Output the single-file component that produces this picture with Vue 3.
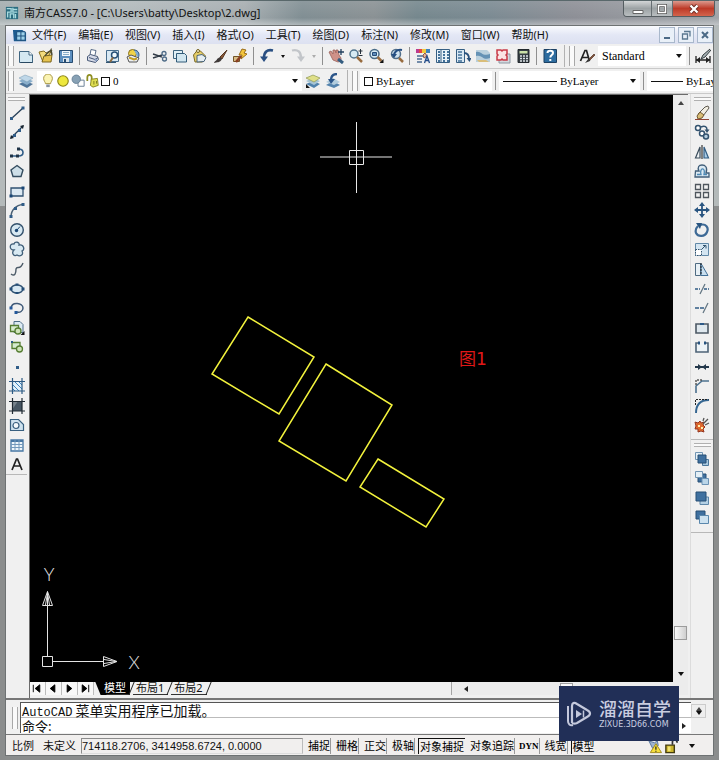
<script setup>
import { ref } from 'vue'

const icons = {
  new: '<path d="M1.5 3.5h9.500l3.500 3.500v7.500h-13z" fill="#d4e8f2" stroke="#3f6581"/><path d="M11 3.500v3.500h3.500" fill="#fff" stroke="#3f6581"/><path d="M2.500 14.500h12" stroke="#284861"/>',
  open: '<path d="M1 4l5-1 2 2 6-3-3 5-6 7z" fill="#f3dc7d" stroke="#8a7220"/><path d="M4 14l2-6 8-1-1 7z" fill="#e6c350" stroke="#7b651c"/><path d="M7 8c2-4 5-4 6-6l1 5" fill="none" stroke="#4b4a33" stroke-width="1.500"/>',
  save: '<path d="M1.500 2.500h13v12h-13z" fill="#5d8fbf" stroke="#264b70"/><path d="M4 3h8v5H4z" fill="#f1f7fb"/><path d="M5 10h6v4H5z" fill="#dbe5ec"/><path d="M6 11h2v3H6z" fill="#264b70"/><path d="M5 4.500h6M5 6.500h6" stroke="#89adc9"/>',
  print: '<path d="M5 7L6 1.500l5 1L10 7" fill="#fff" stroke="#586b88"/><path d="M2.500 8.500l3-2 7 2 1 3-3 3-8-2z" fill="#d5d9e6" stroke="#465876"/><path d="M4 9.500l6 2 3-2" fill="none" stroke="#465876"/><circle cx="11" cy="12" r="1.500" fill="#8ea2c4"/>',
  preview: '<path d="M1.500 2.500h12v11h-12z" fill="#d9e9f3" stroke="#476c8c"/><path d="M1 14.500h10" stroke="#345570"/><circle cx="9.500" cy="7" r="3" fill="#eef8fd" stroke="#264f77" stroke-width="1.500"/><path d="M8 9.500L5 14" stroke="#8c6a40" stroke-width="2"/>',
  publish: '<circle cx="7.500" cy="5.500" r="4" fill="#f0d34b" stroke="#876f18"/><path d="M9 2c5 0 6 5 4 8" fill="#7eabd4" stroke="#315a88"/><path d="M2 9l4-2 8 3-2 4-8 0z" fill="#eceff3" stroke="#555"/><path d="M4 9.500l5 2 3-1" fill="none" stroke="#c39e25" stroke-width="2"/>',
  cut: '<path d="M1 6l9 3M1 10l9-3" stroke="#303a46" stroke-width="1.500"/><circle cx="12" cy="5.500" r="2" fill="none" stroke="#4e6b87" stroke-width="1.300"/><circle cx="12.500" cy="11" r="2" fill="none" stroke="#4e6b87" stroke-width="1.300"/>',
  copy: '<path d="M1.500 2.500h9v8h-9z" fill="#e1f0f6" stroke="#3e657f"/><path d="M4.500 5.500h8l2 2v6.500h-10z" fill="#d1e6f0" stroke="#315b79"/>',
  paste: '<path d="M1.500 7l4-5 3 1 5 5-3 6H3z" fill="#e8cf67" stroke="#7c6a29"/><path d="M5 7.500l5-1 4 3-2 4-7 .5z" fill="#e5edf1" stroke="#48637a"/><circle cx="6" cy="3" r="1.500" fill="#f8f2d0" stroke="#746323"/>',
  brush: '<path d="M15 2l-7 7 2 2z" fill="#8b5835" stroke="#573723"/><path d="M8 9l2 2c-2 4-5 3-8 4 1-3 3-2 3-4z" fill="#403a39"/>',
  block: '<path d="M10 1l4 1-2 3 3 1-6 5 1-4-3 0z" fill="#f4c53d" stroke="#9b6d17"/><path d="M1.500 8.500h6v5h-6z" fill="#d8bd86" stroke="#725326"/><path d="M9 8l-5 6" stroke="#8b3f22" stroke-width="2.500"/>',
  undo: '<path d="M14 2.500C8 1 5 4 5 10" fill="none" stroke="#294f82" stroke-width="2.600"/><path d="M1 8.500h8L5 14z" fill="#294f82"/>',
  redo: '<path d="M2 2.500C8 1 11 4 11 10" fill="none" stroke="#c2c5c9" stroke-width="2.300"/><path d="M7 8.500h8L11 14z" fill="#c2c5c9"/>',
  pan: '<path d="M3 8L1 4l2-1 2 3V2h2l1 3V2h2l1 5 2 3v3l-3 1-5-2z" fill="#cf9188" stroke="#9a625b" stroke-width=".8"/><path d="M10 11l5 4" stroke="#345d80" stroke-width="3"/><path d="M13 1v6M10 4h6" stroke="#23405e" stroke-width="1.300"/>',
  zoom: '<circle cx="6" cy="6" r="4" fill="#d6eaf3" stroke="#52758e" stroke-width="1.500"/><path d="M9 9l5 5" stroke="#986c40" stroke-width="2.500"/><path d="M12.500 1v5M10.500 3h4M10.500 7.500h4" stroke="#25303b"/>',
  zoomWindow: '<circle cx="6.500" cy="6" r="4.500" fill="#d6eaf3" stroke="#486b87" stroke-width="1.500"/><path d="M4.500 4.500h4v3h-4z" fill="#5d8ebd" stroke="#254b77"/><path d="M9.500 9l4 4" stroke="#986c40" stroke-width="2.500"/><path d="M15.500 11v4h-4z" fill="#111"/>',
  zoomPrev: '<circle cx="8" cy="6" r="4.500" fill="#d0e2ef" stroke="#526f8a" stroke-width="1.500"/><path d="M14 2C9 1 6 4 6 8" fill="none" stroke="#254e82" stroke-width="2"/><path d="M3 6h6l-3 4z" fill="#254e82"/><path d="M11 10l4 4" stroke="#986c40" stroke-width="2.500"/>',
  props: '<path d="M1 1h3v4H1z" fill="#bb3c91"/><path d="M4 1h3v4H4z" fill="#e24744"/><path d="M7 1h4v4H7z" fill="#f1cb3c"/><path d="M11 1h4v4h-4z" fill="#3f83bb"/><path d="M2 8h6M2 11h5M2 14h5" stroke="#4a6b92" stroke-width="1.500"/><path d="M8 7l2-2 2 3-3 2z" fill="#e6b39e" stroke="#8e5848"/><path d="M9.500 15L12 8l2.500 7M10.500 12.500h3" fill="none" stroke="#244d8a" stroke-width="1.300"/>',
  design: '<path d="M1.500 1.500h13v13h-13z" fill="#e8f2f9" stroke="#365f83"/><path d="M6 1.500v13" stroke="#365f83"/><path d="M3 4h2M3 7h2M3 10h2M3 13h2M8 4h2M12 4h2M8 7h2M12 7h2M8 10h2M12 10h2M8 13h2M12 13h2" stroke="#44729a" stroke-width="2"/>',
  palette: '<path d="M1.500 1.500h8v13h-8z" fill="#d9e8f3" stroke="#365f83"/><path d="M3 4h4M3 7h4M3 10h4M3 13h4" stroke="#44729a" stroke-width="1.500"/><path d="M9 5c4 0 5 2 5 6" fill="none" stroke="#28507c" stroke-width="1.800"/><path d="M11.500 10h5l-2 4z" fill="#28507c"/>',
  sheet: '<path d="M1 2h11l3 3v9H1z" fill="#bad0dd"/><path d="M1 4c5-2 6 5 14 2v4C8 13 7 6 1 8z" fill="#6592b5"/><path d="M2 12h9l3 2H4z" fill="#d9bd79"/>',
  markup: '<path d="M4 6h11v9H4z" fill="#d4d9df" stroke="#8d98a3"/><path d="M2 2h4l1 1 1-1h4v4l-1 1 1 1v4H8l-1-1-1 1H2V8l1-1-1-1z" fill="#fbe4e4" stroke="#c83845" stroke-width="1.500"/>',
  calc: '<path d="M3 1.500h11v13H3z" fill="#353d43" stroke="#22282d"/><path d="M4.500 3h8v2.500h-8z" fill="#cbe1a8"/><path d="M5 8h2M8 8h2M11 8h2M5 10.500h2M8 10.500h2M11 10.500h2M5 13h2M8 13h2M11 13h2" stroke="#dce2e6" stroke-width="1.500"/>',
  help: '<path d="M2 1.500h12.500v13H2z" fill="#2d6c9f" stroke="#1c4163"/><path d="M5.500 5c0-3 5.500-3 5.500 0 0 2-2.700 2-2.700 4.500" fill="none" stroke="#fff" stroke-width="2"/><path d="M7.300 11h2v2h-2z" fill="#fff"/>',
  textStyle: '<path d="M1.500 13L6 2.500h1.500L10.500 13M3.500 9.500h6" fill="none" stroke="#222" stroke-width="1.700"/><path d="M15 6l-5 5 1 1 5-5z" fill="#885338" stroke="#5d4034" stroke-width=".8"/><path d="M10 10l-4 5 5-2z" fill="#333"/>',
  dim: '<path d="M1 8v7M15 8v7M1 12h14" stroke="#222" stroke-width="1.300"/><path d="M1 12l4-3v6zM15 12l-4-3v6z" fill="#222"/><path d="M15 1L8 7l-2 4 4-2 6-7" fill="#a7b2b5" stroke="#343b3e"/>',
  layers: '<path d="M1 11l6-3 8 3-6 4z" fill="#4f7498"/><path d="M1 8l6-3 8 3-6 4z" fill="#89aecb"/><path d="M1 5l6-3 8 3-6 4z" fill="#bfd7e8" stroke="#7496b0" stroke-width=".5"/>',
  bulb: '<path d="M5 11c0-2-2-3-2-6a5 5 0 0 1 10 0c0 3-2 4-2 6z" fill="#fbf4b3" stroke="#9f8d36"/><path d="M6 12h4v3H6z" fill="#8793a4"/>',
  sun: '<circle cx="8" cy="8" r="6" fill="#eee83d" stroke="#8c851a" stroke-width="1.300"/>',
  viewport: '<path d="M8 7h7v7H8z" fill="#fff" stroke="#5c738a"/><circle cx="6" cy="6" r="4.800" fill="#87a1b5" stroke="#647e94"/>',
  lock: '<path d="M1.500 8V4c0-4 5-4 5 0v4" fill="none" stroke="#8f8e22" stroke-width="2"/><path d="M6 6l7-1 1 8-6 2-3-2z" fill="#dfde51" stroke="#80801d"/><path d="M9 8v4M12 8v3" stroke="#77771c"/>',
  makeLayer: '<path d="M1 11l7-3 7 3-6 4z" fill="#4f82ad"/><path d="M1 8l7-3 7 3-6 4z" fill="#a7c5d5"/><path d="M1 5l7-3 7 3-6 4z" fill="#dfdf87" stroke="#8d9654" stroke-width=".7"/><path d="M1 15v-4l4 4z" fill="#111"/>',
  prevLayer: '<path d="M1 12l7-4 7 4-6 3z" fill="#5483ad"/><path d="M1 9l7-4 7 4-6 3z" fill="#b3cddd"/><path d="M12 1C7 1 6 4 6 7" fill="none" stroke="#2c568a" stroke-width="2.300"/><path d="M3 6h7l-4 5z" fill="#2c568a"/>',
  line: '<path d="M2.500 13.500L14 3" stroke="#263e56" stroke-width="1.300"/><path d="M1 12h3v3H1zM12.500 1.500h3v3h-3z" fill="#315d88"/>',
  xline: '<path d="M2 14L14 2" stroke="#263e56" stroke-width="1.300"/><path d="M1 15l1-4 3 3zM15 1l-1 4-3-3z" fill="#17232f"/><path d="M4 10h3v3H4zM9 5h3v3H9z" fill="#315d88"/>',
  pline: '<path d="M1.500 12h8c6 0 6-7 0-7" fill="none" stroke="#315d88" stroke-width="1.600"/><path d="M1 10.500h3v3H1zM7 10.500h3v3H7zM8 3.500h3v3H8z" fill="#1e3246"/>',
  polygon: '<path d="M8 2.500l6 4.500-2 6.500H4L2 7z" fill="#cedfe8" stroke="#354d60" stroke-width="1.400"/>',
  rect: '<path d="M2 5h12v8H2z" fill="#dce9f2" stroke="#315272" stroke-width="1.300"/><path d="M.5 11.500h3v3h-3zM12.500 3.500h3v3h-3z" fill="#1b4775"/>',
  arc: '<path d="M2 15C2 8 7 3 14 2.500" fill="none" stroke="#4b6175" stroke-width="1.500"/><path d="M.5 13h3v3h-3zM5 5h3v3H5zM12.500 1h3v3h-3z" fill="#315d88"/>',
  circle: '<circle cx="8" cy="8" r="6.300" fill="#d8e9f2" stroke="#33516c" stroke-width="1.400"/><path d="M8 8l3-3.500" stroke="#1b4775"/><circle cx="7.500" cy="8.500" r="1.700" fill="#1b4775"/>',
  cloud: '<path d="M5 9C0 9 0 2 5 3c1-3 6-2 5 1 5-1 6 5 3 6 2 4-2 6-5 4-3 2-6-2-3-5z" fill="#d8e9f2" stroke="#405f79" stroke-width="1.300"/>',
  spline: '<path d="M2 13c4 3 5-1 5-5 1-4 4 2 7-6" fill="none" stroke="#4b5a67" stroke-width="1.400"/>',
  ellipse: '<ellipse cx="8" cy="8" rx="6" ry="4" fill="#d7e8f3" stroke="#315272" stroke-width="1.400"/><path d="M.5 6.500h3v3h-3zM12.500 6.500h3v3h-3zM6.500 2.500h3v2h-3zM6.500 11h3v2h-3z" fill="#244e78"/>',
  ellipseArc: '<path d="M2 8C3 1 14 3 14 8c0 3-3 5-6 4" fill="none" stroke="#405a78" stroke-width="1.500"/><path d="M.5 6.500h3v3h-3zM5.500 11h3v3h-3z" fill="#24589a"/>',
  insert: '<path d="M5 1.500h6l3 3v8H5z" fill="#dceaf3" stroke="#4d6d87"/><path d="M1.500 5.500h8v6h-8z" fill="#d6ebcf" stroke="#557d32" stroke-width="1.300"/><circle cx="9" cy="11" r="3" fill="#cfe4b9" stroke="#557d32" stroke-width="1.300"/><path d="M15.500 11v4h-4z" fill="#111"/>',
  makeBlock: '<path d="M3 3.500h8v6H3z" fill="#d6ebcf" stroke="#557d32" stroke-width="1.300"/><circle cx="10.500" cy="10" r="3" fill="#cfe4b9" stroke="#557d32" stroke-width="1.300"/><path d="M2 2h2v2H2z" fill="#295a86"/>',
  point: '<path d="M7 7h3v3H7z" fill="#315d88"/>',
  hatch: '<path d="M3 3h10v10H3z" fill="#e2f1fa"/><path d="M3 6l7 7M3 10l3 3M5 3l8 8M9 3l4 4" stroke="#3c83bd"/><path d="M3.500 0v16M13 0v16M0 3.500h16M0 13h16" stroke="#2d5a83" stroke-width="1.200"/>',
  gradient: '<path d="M3 3h10v10H3z" fill="#485764"/><path d="M3 3h6L3 12z" fill="#79848d"/><path d="M3.500 0v16M13 0v16M0 3.500h16M0 13h16" stroke="#202a33" stroke-width="1.200"/>',
  region: '<path d="M1.500 2.500h8l5 5v6h-13z" fill="#cee2ef" stroke="#385f7f" stroke-width="1.200"/><circle cx="7" cy="8.500" r="3" fill="#f3f9fc" stroke="#385f7f" stroke-width="1.200"/>',
  table: '<path d="M2 3h12v11H2z" fill="#eef6fb" stroke="#4777a4" stroke-width="1.300"/><path d="M2 4h12" stroke="#4777a4" stroke-width="2"/><path d="M2 7.500h12M2 10.500h12M6 3v11M10 3v11" stroke="#7399bc"/>',
  text: '<path d="M3 14L7.500 3h1L13 14M5 10h6" fill="none" stroke="#222" stroke-width="1.700"/>',
  erase: '<path d="M11 2l3-1 1 2-6 8-3 1-2-3z" fill="#f2eee2" stroke="#5e5a50"/><path d="M6 7l4 3-2 3-4 1-1-3z" fill="#d9bd75" stroke="#705833"/><path d="M1 14.500h14" stroke="#8f4334"/>',
  copyObj: '<circle cx="4" cy="4" r="2.500" fill="#fff" stroke="#33536f" stroke-width="1.500"/><circle cx="8" cy="9.500" r="2.500" fill="#fff" stroke="#33536f" stroke-width="1.500"/><circle cx="12" cy="12.500" r="2.500" fill="#b5cee0" stroke="#33536f" stroke-width="1.500"/><path d="M7 3c4-2 6 0 6 3" fill="none" stroke="#33536f" stroke-width="1.500"/><path d="M10.500 5.500h5L13 9z" fill="#33536f"/>',
  mirror: '<path d="M6 3v11H1.500z" fill="#eef2f4" stroke="#3a4c5b" stroke-width="1.200"/><path d="M10 3v11h4.500z" fill="#a9cbe5" stroke="#315c82" stroke-width="1.200"/><path d="M8 1v14" stroke="#111"/>',
  offset: '<path d="M1 14h14v-4h-3c2-6-1-8-4-8S3 4 5 8H1.500z" fill="#dbe9f2" stroke="#405e79" stroke-width="1.300"/><path d="M3 11.500h4c-2-7 5-8 3 0h3" fill="none" stroke="#4c88b4" stroke-width="1.300"/>',
  array: '<path d="M1.500 1.500h5v5h-5zM9.500 1.500h5v5h-5zM1.500 9.500h5v5h-5zM9.500 9.500h5v5h-5z" fill="#f3f3f3" stroke="#4f565d" stroke-width="1.300"/>',
  move: '<path d="M8 3v10M3 8h10" stroke="#285480" stroke-width="1.800"/><path d="M8 0l3 4H5zM8 16l3-4H5zM0 8l4-3v6zM16 8l-4-3v6z" fill="#285480"/>',
  rotate: '<path d="M6 3c6-2 9 3 7 7-2 5-9 5-11 1-1-3 0-5 2-7" fill="none" stroke="#3e6a96" stroke-width="2.200"/><path d="M2 1h6L6 7z" fill="#285480"/>',
  scale: '<path d="M1.500 2.500h13v12h-13z" fill="#d4e5f1" stroke="#6188a7"/><path d="M1.500 8.500h6v6h-6z" fill="#fff" stroke="#33536e" stroke-dasharray="1.500 1"/><path d="M8 8l3-3M9 4.500h3v3" stroke="#33536e" fill="none"/>',
  stretch: '<path d="M1.500 2.500h5v12h-5z" fill="#e8f0f5" stroke="#4f6b82"/><path d="M7 2.500l7 12H7z" fill="#c9dfef" stroke="#416f97"/><path d="M7 2v12" stroke="#222" stroke-dasharray="2 1"/>',
  trim: '<path d="M1 8h5M10 8h5" stroke="#315b84" stroke-width="1.500" stroke-dasharray="3 1"/><path d="M6 13l5-10" stroke="#637583" stroke-width="1.300"/>',
  extend: '<path d="M1 8h9" stroke="#315b84" stroke-width="1.500" stroke-dasharray="4 1"/><path d="M9 13l5-10" stroke="#637583" stroke-width="1.300"/>',
  breakPoint: '<path d="M2 4h12v9H2z" fill="#dfe8ee" stroke="#4d5965" stroke-width="1.600"/><path d="M6 3h4v2H6z" fill="#2d5987"/>',
  breakGap: '<path d="M5 4H2v9h12V4h-3" fill="#edf3f7" stroke="#4d6377" stroke-width="1.600"/><path d="M4 2.500h2v3H4zM10 2.500h2v3h-2z" fill="#285480"/>',
  join: '<path d="M1 8h14" stroke="#24384b" stroke-width="2"/><path d="M4 5l4 3-4 3zM12 5L8 8l4 3z" fill="#24384b"/>',
  chamfer: '<path d="M2 15V8l6-5h7" fill="none" stroke="#4c718f" stroke-width="1.600"/><path d="M2 7V2h6" fill="none" stroke="#111" stroke-dasharray="2 1"/>',
  fillet: '<path d="M2 15C2 7 6 2 15 2" fill="none" stroke="#356691" stroke-width="1.900"/><path d="M1.500 7V1.500h13" fill="none" stroke="#222" stroke-dasharray="2 1"/>',
  explode: '<path d="M1 5l3 1 2-2 1 2 3-1-1 3 2 2-2 2 1 3-3-1-3 1v-3L1 12l1-3z" fill="#df6a2e" stroke="#94351f"/><path d="M4 8h2v2H4zM7 10h2v2H7z" fill="#fff0b0"/><path d="M9 7l5-5M11 8l4-2M9 4l1-3" stroke="#555" stroke-width="1.300"/>',
  front: '<path d="M1.500 1.500h7v7h-7z" fill="#e4eff6" stroke="#7094b2"/><path d="M8.500 8.500h6v6h-6z" fill="#a9c8df" stroke="#4c779b"/><path d="M4 4h8v8H4z" fill="#3f709f" stroke="#264e75"/>',
  back: '<path d="M4 4h8v8H4z" fill="#3f709f" stroke="#264e75"/><path d="M1.500 1.500h7v6h-7z" fill="#e4eff6" stroke="#7094b2"/><path d="M8 8.500h6.500v6H8z" fill="#bad5e8" stroke="#6c93b5"/>',
  above: '<path d="M6 7h8.500v7.500H6z" fill="#b4d0e4" stroke="#5d86a9"/><path d="M2 2h10v9H2z" fill="#3f709f" stroke="#264e75"/>',
  under: '<path d="M2 2h9v8H2z" fill="#3f709f" stroke="#264e75"/><path d="M5.500 6.500h9v8h-9z" fill="#cde2f0" stroke="#5a88ad"/>'
}

const menus = ['文件(F)', '编辑(E)', '视图(V)', '插入(I)', '格式(O)', '工具(T)', '绘图(D)', '标注(N)', '修改(M)', '窗口(W)', '帮助(H)']
const standardBar = [
  'new', 'open', 'save', '|', 'print', 'preview', 'publish', '|',
  'cut', 'copy', 'paste', 'brush', 'block', '|', 'undo', 'v', 'redo', 'w', '|',
  'pan', 'zoom', 'zoomWindow', 'zoomPrev', '|',
  'props', 'design', 'palette', 'sheet', 'markup', 'calc', '|', 'help'
]
const drawBar = ['line', 'xline', 'pline', 'polygon', 'rect', 'arc', 'circle', 'cloud', 'spline', 'ellipse', 'ellipseArc', 'insert', 'makeBlock', 'point', 'hatch', 'gradient', 'region', 'table', 'text']
const modifyBar = ['erase', 'copyObj', 'mirror', 'offset', 'array', 'move', 'rotate', 'scale', 'stretch', 'trim', 'extend', 'breakPoint', 'breakGap', 'join', 'chamfer', 'fillet', 'explode']
const orderBar = ['front', 'back', 'above', 'under']
const layerState = ['bulb', 'sun', 'viewport', 'lock']
const navs = [
  { name: 'first', d: 'M3 3v8M10 3v8L5 7z' },
  { name: 'previous', d: 'M9 3v8L4 7z' },
  { name: 'next', d: 'M5 3v8l5-4z' },
  { name: 'last', d: 'M4 3v8l5-4zM11 3v8' }
]
const modes = ref([
  { label: '捕捉', on: false }, { label: '栅格', on: false }, { label: '正交', on: false },
  { label: '极轴', on: false }, { label: '对象捕捉', on: true }, { label: '对象追踪', on: false },
  { label: 'DYN', on: false }, { label: '线宽', on: false }, { label: '模型', on: true }
])
const command = ref('')
</script>

<template>
  <div class="window">
    <header class="title">
      <svg class="app-icon" viewBox="0 0 16 16" aria-hidden="true">
        <path d="M1 1h14v14H1z" fill="#2b6d80" />
        <path d="M2 3h5v4H3v6M9 2v5h5M6 14V9h4v5M12 9v5M9 4h5" fill="none" stroke="#a9dce0" stroke-width="1.500" />
      </svg>
      <h1>南方CASS7.0 - [C:\Users\batty\Desktop\2.dwg]</h1>
      <div class="win-buttons">
        <button aria-label="Minimize"><svg viewBox="0 0 16 14"><path d="M3 8.500h10v3H3z" fill="#fff" stroke="#666" /></svg></button>
        <button aria-label="Restore"><svg viewBox="0 0 16 14"><path d="M4.500 3.500h7v7h-7z" fill="none" stroke="#555" stroke-width="3" /><path d="M4.500 3.500h7v7h-7z" fill="none" stroke="#fff" stroke-width="1.500" /></svg></button>
        <button class="close" aria-label="Close"><svg viewBox="0 0 16 14"><path d="M4.500 3.500l7 7M11.500 3.500l-7 7" stroke="#6d2b22" stroke-width="4" /><path d="M4.500 3.500l7 7M11.500 3.500l-7 7" stroke="#fff" stroke-width="2.300" /></svg></button>
      </div>
    </header>

    <div class="body">
      <nav class="menu">
        <svg class="doc-icon" viewBox="0 0 16 16" aria-hidden="true">
          <path d="M1 2h10l4 3v9H2z" fill="#1d5b8f" />
          <path d="M5 4h9v9H5z" fill="#9cd0ea" stroke="#174a77" />
          <path d="M9.500 4v9M5 8.500h9" stroke="#174a77" />
        </svg>
        <button v-for="m in menus" :key="m" class="menu-item">{{ m }}</button>
        <span class="mdi">
          <button aria-label="Minimize drawing"><svg viewBox="0 0 14 14"><path d="M4 10h6" stroke="#4b6a86" stroke-width="2" /></svg></button>
          <button aria-label="Restore drawing"><svg viewBox="0 0 14 14"><path d="M5 3.500h6v5M3.500 6h5v5h-5z" fill="none" stroke="#5a7890" stroke-width="1.300" /></svg></button>
          <button aria-label="Close drawing"><svg viewBox="0 0 14 14"><path d="M4 4l6 6M10 4l-6 6" stroke="#4b6a86" stroke-width="2" /></svg></button>
        </span>
      </nav>

      <div class="bar">
        <span class="grip"></span>
        <template v-for="(t, i) in standardBar" :key="i">
          <span v-if="t === '|'" class="sep"></span>
          <button v-else-if="t === 'v' || t === 'w'" class="drop" :class="{ off: t === 'w' }" aria-label="History"><span class="tri small"></span></button>
          <button v-else class="tool" :aria-label="t"><svg viewBox="0 0 16 16" v-html="icons[t]"></svg></button>
        </template>
        <span class="edge"></span>
        <span class="grip"></span>
        <button class="tool" aria-label="textStyle"><svg viewBox="0 0 16 16" v-html="icons.textStyle"></svg></button>
        <span class="combo style-combo">
          <select aria-label="Text style"><option>Standard</option></select>
          <span class="tri"></span>
        </span>
        <span class="sep"></span>
        <button class="tool" aria-label="dim"><svg viewBox="0 0 16 16" v-html="icons.dim"></svg></button>
      </div>

      <div class="bar">
        <span class="grip"></span>
        <button class="tool" aria-label="layers"><svg viewBox="0 0 16 16" v-html="icons.layers"></svg></button>
        <span class="combo layer-combo">
          <svg v-for="s in layerState" :key="s" class="state" viewBox="0 0 16 16" aria-hidden="true" v-html="icons[s]"></svg>
          <span class="swatch"></span>
          <select aria-label="Layer"><option>0</option></select>
          <span class="tri"></span>
        </span>
        <button class="tool" aria-label="makeLayer"><svg viewBox="0 0 16 16" v-html="icons.makeLayer"></svg></button>
        <button class="tool" aria-label="prevLayer"><svg viewBox="0 0 16 16" v-html="icons.prevLayer"></svg></button>
        <span class="edge"></span>
        <span class="grip"></span>
        <span class="combo color-combo">
          <span class="swatch"></span>
          <select aria-label="Color"><option>ByLayer</option></select>
          <span class="tri"></span>
        </span>
        <span class="sep"></span>
        <span class="combo type-combo">
          <span class="rule long"></span>
          <select aria-label="Linetype"><option>ByLayer</option></select>
          <span class="tri"></span>
        </span>
        <span class="sep"></span>
        <span class="combo weight-combo">
          <span class="rule"></span>
          <select aria-label="Lineweight"><option>ByLayer</option></select>
        </span>
      </div>

      <main class="work">
        <aside class="dock left">
          <div class="palette">
            <span class="hgrip"></span>
            <div class="tools draw">
              <button v-for="t in drawBar" :key="t" class="vtool" :aria-label="t"><svg viewBox="0 0 16 16" v-html="icons[t]"></svg></button>
            </div>
          </div>
        </aside>

        <section class="view">
          <div class="canvas">
            <svg class="drawing" aria-hidden="true">
              <g fill="none" stroke="#f2f23c" stroke-width="1.500">
                <path d="M218 222L284 262L249 319L182 279z" />
                <path d="M296 269L362 310L316 386L249 346z" />
                <path d="M348 364L414 404L396 432L330 392z" />
              </g>
              <path d="M290 62H362M326.500 27V98M319.500 55.500h14v14h-14z" fill="none" stroke="#e8e8e8" />
              <text x="429" y="270" class="note">图<tspan class="digit">1</tspan></text>
            </svg>
            <svg class="ucs" viewBox="0 0 120 121" aria-hidden="true">
              <path d="M12.500 95.500h10v10h-10zM17.500 95V30.500M12.500 44.500L17.500 30.500L22.500 44.500zM15.500 44l2-12 2 12M23 100.500h50M73.500 95.500L87 100.500L73.500 105.500zM74 98.500l12 2-12 2" fill="none" stroke="#e4e4e4" />
              <text x="19" y="20" class="axis">Y</text>
              <text x="104" y="108" class="axis">X</text>
            </svg>
          </div>
          <div class="vscroll">
            <span class="tri up"></span>
            <span class="thumb"></span>
            <span class="tri"></span>
          </div>
          <div class="tabs">
            <button v-for="n in navs" :key="n.name" class="nav" :aria-label="n.name"><svg viewBox="0 0 14 14"><path :d="n.d" fill="#000" stroke="#000" /></svg></button>
            <button class="tab active">模型</button>
            <button class="tab">布局1</button>
            <button class="tab">布局2</button>
            <div class="hscroll">
              <span class="tri west"></span>
              <span class="hthumb"></span>
              <span class="tri east"></span>
            </div>
          </div>
        </section>

        <aside class="dock right">
          <div class="palette">
            <span class="hgrip"></span>
            <div class="tools modify">
              <button v-for="t in modifyBar" :key="t" class="vtool" :aria-label="t"><svg viewBox="0 0 16 16" v-html="icons[t]"></svg></button>
            </div>
          </div>
          <div class="palette">
            <span class="hgrip"></span>
            <div class="tools order">
              <button v-for="t in orderBar" :key="t" class="vtool" :aria-label="t"><svg viewBox="0 0 16 16" v-html="icons[t]"></svg></button>
            </div>
          </div>
        </aside>
      </main>

      <section class="command">
        <span class="grip"></span>
        <div class="console">
          <p><span class="latin">AutoCAD</span> 菜单实用程序已加载。</p>
          <div class="prompt">
            <label for="cmd">命令:</label>
            <input id="cmd" v-model="command" type="text" autocomplete="off" />
            <span class="tri east"></span>
          </div>
        </div>
        <div class="cscroll"><span class="tri up"></span><span class="tri"></span></div>
      </section>

      <footer class="status">
        <span class="scale">比例</span>
        <span class="scale">未定义</span>
        <output class="coords">714118.2706, 3414958.6724, 0.0000</output>
        <button v-for="m in modes" :key="m.label" class="mode" :class="{ on: m.on, dyn: m.label === 'DYN' }" @click="m.on = !m.on">{{ m.label }}</button>
        <span class="tray">
          <svg viewBox="0 0 16 16" aria-hidden="true"><path d="M2 2l6 2 3-2 1 5-6 3z" fill="#9fb3cf" stroke="#56749d" /><path d="M9.500 5l6 9.500h-12z" fill="#f7e03c" stroke="#a18a19" /><path d="M9.500 8v3.500M9.500 12.500v1" stroke="#222" stroke-width="1.300" /></svg>
          <svg viewBox="0 0 16 16" aria-hidden="true"><path d="M2 6.500h9v8H2z" fill="#cbb52c" stroke="#443c10" stroke-width="1.500" /><path d="M9 6V3c0-3 5-3 5 1" fill="none" stroke="#333" stroke-width="1.800" /><path d="M4 8h3v5H4z" fill="#f0e277" /></svg>
          <span class="tri"></span>
        </span>
      </footer>
    </div>

    <div class="badge">
      <svg viewBox="0 0 26 28" aria-hidden="true">
        <path d="M6 23V6c0-3 2-4 5-2l10 6c4 2 4 5 0 7l-10 6c-2 1-3 1-5 0" fill="none" stroke="#c4c9dc" stroke-width="2.200" />
        <path d="M2 6v15c0 3 2 5 5 4" fill="none" stroke="#c4c9dc" stroke-width="2" />
        <path d="M10 10l6 4-6 4z" fill="#c4c9dc" />
        <path d="M17.500 10.500v7" stroke="#c4c9dc" stroke-width="1.500" />
      </svg>
      <div class="brand">
        <strong>溜溜自学</strong>
        <small>ZIXUE.3D66.COM</small>
      </div>
    </div>
  </div>
</template>

<style>
body { margin: 0; background: #8c8f8f; }
</style>

<style scoped>
* { box-sizing: border-box; }
button, select, input {
  appearance: none; border: 0; margin: 0; padding: 0; background: none;
  font: inherit; color: inherit; border-radius: 0; outline: 0;
}
svg { display: block; flex: none; }

.window {
  position: relative; display: flex; flex-direction: column; min-height: 100vh;
  padding: 0 5px 4px; overflow: hidden;
  background: linear-gradient(#b4baba 0 206px, #8b8d8d 206px);
  font: 11px/14px "Noto Sans", "Noto Sans CJK SC", sans-serif; color: #111;
}
.title {
  display: flex; align-items: center; height: 25px; margin: 0 -5px; padding-left: 5px;
  border-top: 1px solid #59686b;
  background:
    linear-gradient(rgba(255,255,255,.1), rgba(255,255,255,0) 70%, rgba(255,255,255,.35)),
    linear-gradient(90deg, #a3adaf 0, #b2babc 17%, #a6adb0 34%, #808e93 42%, #8a9194 52%, #75878d 58%, #7b8a92 68%, #8d8f96 80%, #a0a5a9);
}
.app-icon { width: 14px; height: 14px; }
h1 { flex: 1; margin: 0 0 0 5px; font: 11px/16px "Noto Sans", "Noto Sans CJK SC", sans-serif; color: #111; white-space: nowrap; }
.win-buttons {
  display: flex; align-self: flex-start; margin-right: 4px; height: 16px;
  border: 1px solid #555d61; border-top: 0; border-radius: 0 0 4px 4px; overflow: hidden;
}
.win-buttons button {
  display: flex; align-items: center; justify-content: center; width: 28px;
  background: linear-gradient(#d3d6d7, #9ca2a4 50%, #b9bec0); border-right: 1px solid #666e72;
}
.win-buttons button:nth-child(2) { width: 21px; }
.win-buttons .close { width: 41px; border: 0; background: linear-gradient(#dc9a8e, #bd3a28 50%, #d3644c); }
.win-buttons svg { width: 16px; height: 14px; }

.body { flex: 1; display: flex; flex-direction: column; min-width: 0; background: #f0f0f0; border: 1px solid #6e7273; }
.menu {
  display: flex; align-items: center; height: 18px; padding-left: 6px; overflow: hidden;
  background: linear-gradient(#fafbfe, #e3e7f5 50%, #dde1f1);
}
.doc-icon { width: 15px; height: 15px; margin-right: 5px; }
.menu-item { flex: none; margin-right: 12px; white-space: nowrap; }
.mdi { display: flex; gap: 3px; margin-left: auto; }
.mdi button { width: 16px; height: 16px; border: 1px solid #a9b8cc; background: #e9f0f8; }
.mdi svg { width: 14px; height: 14px; }

.bar { display: flex; align-items: center; height: 25px; padding-left: 2px; border-bottom: 1px solid #c9c9c9; overflow: hidden; }
.grip { flex: none; width: 6px; height: 20px; margin-right: 2px; border: solid #a8a8a8; border-width: 0 1px; background: #fafafa; }
.tool { flex: none; display: flex; align-items: center; justify-content: center; width: 20px; height: 20px; }
.tool svg, .vtool svg { width: 16px; height: 16px; }
.sep { flex: none; width: 1px; height: 18px; margin: 0 3px; background: #8f8f8f; }
.edge { flex: none; width: 1px; height: 22px; margin: 0 4px; background: #b2b2b2; }
.drop { flex: none; display: flex; align-items: center; justify-content: center; width: 11px; height: 20px; }
.off { opacity: .3; }
.tri { flex: none; width: 0; height: 0; border: solid transparent; border-width: 4px 3px 0; border-top-color: #111; }
.tri.small { border-width: 3px 2px 0; }
.tri.up { border-color: transparent transparent #444; border-width: 0 3px 4px; }
.tri.west { border-color: transparent #222 transparent transparent; border-width: 3px 4px 3px 0; }
.tri.east { border-color: transparent transparent transparent #222; border-width: 3px 0 3px 4px; }

.combo {
  flex: none; display: flex; align-items: center; height: 20px; padding: 0 4px; background: #fff;
  font: 11px/14px "Liberation Serif", serif; color: #000;
}
.combo select { flex: 1; min-width: 0; padding-left: 3px; }
.style-combo { width: 88px; margin-left: 1px; font-size: 12px; }
.style-combo select { padding: 0; }
.layer-combo { width: 265px; margin: 0 1px; }
.color-combo { width: 132px; }
.type-combo { width: 141px; }
.weight-combo { flex: 1; overflow: hidden; padding-right: 0; }
.weight-combo select { flex: none; }
.state { width: 14px; height: 14px; margin-right: 1px; }
.swatch { flex: none; width: 9px; height: 9px; border: 1px solid #111; background: #fff; }
.rule { flex: none; width: 32px; height: 1px; background: #111; }
.rule.long { width: 54px; }

.work { flex: 1; display: flex; min-height: 0; }
.dock { flex: none; width: 23px; }
.dock.left { padding-right: 2px; }
.dock.right { border-left: 1px solid #dcdcdc; }
.palette { display: flex; flex-direction: column; align-items: center; padding-top: 3px; border-bottom: 1px solid #b8b8b8; }
.hgrip { width: 17px; height: 4px; border: solid #b0b0b0; border-width: 1px 0; background: #fafafa; }
.tools { display: flex; flex-direction: column; margin-top: 2px; }
.draw { height: 371px; }
.modify { height: 332px; margin-bottom: 4px; }
.order { height: 78px; margin-bottom: 5px; }
.vtool { flex: 1; display: flex; align-items: center; justify-content: center; width: 20px; min-height: 0; }

.view {
  flex: 1; min-width: 0; display: grid; grid-template-columns: 1fr 15px; grid-template-rows: 1fr 16px;
  border: solid #6b6b6b; border-width: 1px 0 0 1px; margin-right: 2px;
}
.canvas { position: relative; background: #000; overflow: hidden; min-height: 480px; }
.drawing { position: absolute; inset: 0; width: 100%; height: 100%; }
.ucs { position: absolute; left: 0; bottom: 0; width: 120px; height: 121px; }
.note { font: 17px "Noto Sans CJK SC", sans-serif; fill: #e01818; }
.digit { font-family: "DejaVu Sans", sans-serif; }
.axis { font: 300 18px Lato, "Liberation Sans", sans-serif; fill: #e4e4e4; text-anchor: middle; }
.vscroll { display: flex; flex-direction: column; align-items: center; padding: 6px 0; background: #ececec; }
.thumb { width: 13px; height: 14px; margin: auto 0 32px; border: 1px solid #9c9c9c; background: linear-gradient(90deg, #fafafa, #cfcfcf); }
.tabs { grid-column: 1 / 3; display: flex; align-items: flex-start; height: 13px; }
.nav { flex: none; width: 16px; height: 13px; border-right: 1px solid #bcbcbc; background: #f8f8f8; }
.nav svg { width: 14px; height: 13px; }
.tab {
  position: relative; flex: none; height: 13px; padding: 0 4px 0 3px; margin-left: 3px; line-height: 12px;
  font-size: 11px; border-bottom: 1px solid #333; z-index: 0;
}
.tab::after { content: ""; position: absolute; right: -2px; top: 0; width: 1px; height: 13px; background: #222; transform: skewX(-22deg); }
.tab.active { margin-left: 7px; color: #fff; background: #000; }
.tab.active::before { content: ""; position: absolute; left: -3px; top: 0; width: 6px; height: 13px; background: #000; transform: skewX(22deg); z-index: -1; }
.hscroll {
  display: flex; align-items: center; justify-content: space-between; width: 36%; height: 13px;
  margin-left: auto; padding: 0 20px 0 12px; border-left: 1px solid #a5a5a5; background: #ececec;
}
.hthumb { width: 13px; height: 12px; border: 1px solid #a0a0a0; background: #fafafa; }

.command { display: flex; align-items: center; height: 37px; padding: 3px 7px 2px 6px; border: solid #777; border-width: 2px 0 1px; }
.command .grip { height: 22px; }
.console { flex: 1; min-width: 0; border: solid #555; border-width: 1px 0 0 1px; background: #fff; font: 14px/14px "Noto Sans CJK SC", sans-serif; }
.console p { margin: 0; padding-left: 1px; height: 15px; border-bottom: 1px solid #bbb; white-space: nowrap; }
.latin { font: 12px/12px "Liberation Mono", monospace; }
.prompt { display: flex; align-items: center; height: 15px; padding-left: 1px; font-size: 13px; }
.prompt input { flex: 1; min-width: 0; height: 14px; margin-left: 4px; }
.prompt .tri { margin-right: 5px; }
.cscroll { display: flex; flex-direction: column; align-items: center; justify-content: space-between; width: 15px; height: 14px; margin-bottom: 14px; padding: 2px 0; border: 1px solid #ccc; background: #eee; }

.status { display: flex; align-items: center; height: 20px; padding: 2px 0 0 6px; background: #f1efee; white-space: nowrap; }
.scale { margin-right: 9px; font-size: 11px; }
.scale + .scale { margin-right: 5px; }
.coords {
  flex: none; width: 222px; height: 16px; border: 1px solid; border-color: #8c8c8c #bbb #ddd #8c8c8c;
  font: 11px/15px "Liberation Sans", sans-serif;
}
.mode { flex: none; height: 16px; padding-left: 5px; border-right: 1px solid #999; color: #000; }
.mode.on { padding: 0 1px; margin-left: 3px; border: solid #111; border-width: 1px 0 0 1px; }
.mode.dyn { padding-left: 4px; font: bold 9px/14px "Liberation Serif", serif; }
.tray { display: flex; align-items: center; gap: 2px; margin-left: auto; padding-right: 18px; }
.tray svg { width: 15px; height: 15px; }
.tray .tri { margin-left: 8px; }

.badge {
  position: absolute; right: 40px; bottom: 19px; display: flex; align-items: center; gap: 7px;
  width: 120px; height: 55px; padding-left: 7px; background: #212f57; color: #c9cde0;
}
.badge svg { width: 26px; height: 28px; }
.brand { display: flex; flex-direction: column; gap: 3px; }
.brand strong { font: 500 18px/18px "Noto Sans CJK SC", sans-serif; }
.brand small { font: 8px/9px "DejaVu Sans", sans-serif; }
</style>
